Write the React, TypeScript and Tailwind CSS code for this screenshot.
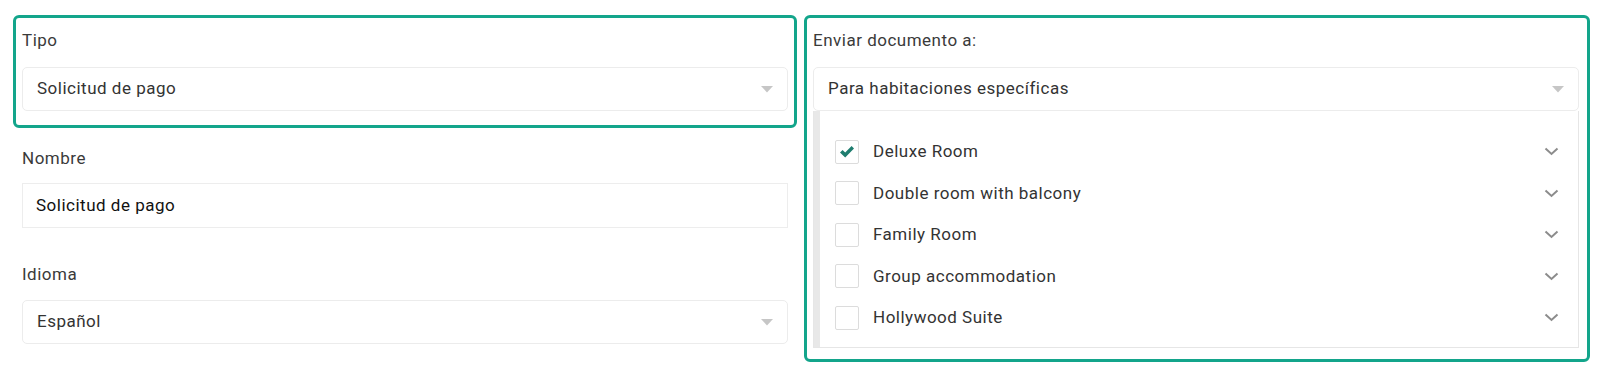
import React from "react";

const rooms = [
  { name: "Deluxe Room", checked: true },
  { name: "Double room with balcony", checked: false },
  { name: "Family Room", checked: false },
  { name: "Group accommodation", checked: false },
  { name: "Hollywood Suite", checked: false },
];

function Caret() {
  return (
    <svg width="12" height="7" viewBox="0 0 12 7" className="shrink-0">
      <path d="M0 0 L12 0 L6 6.5 Z" fill="#c6c6c6" />
    </svg>
  );
}

function Chevron() {
  return (
    <svg width="15" height="9" viewBox="0 0 15 9" className="shrink-0">
      <path d="M1.5 1.5 L7.5 7 L13.5 1.5" fill="none" stroke="#8c8c8c" strokeWidth="2" />
    </svg>
  );
}

function Select({ value }: { value: string }) {
  return (
    <div className="flex h-[44px] items-center justify-between rounded-[5px] border border-[#ececec] bg-white pl-[14px] pr-[14px]">
      <span className="text-[17px] tracking-[0.5px] text-[#333]">{value}</span>
      <Caret />
    </div>
  );
}

function Label({ children }: { children: React.ReactNode }) {
  return (
    <div className="text-[17px] leading-[24px] tracking-[0.5px] text-[#3a3a3a]">{children}</div>
  );
}

export default function App() {
  return (
    <div
      className="flex h-[379px] w-[1600px] gap-[7px] bg-white pl-[13px] pr-[10px] pt-[15px]"
      style={{ fontFamily: "Roboto, 'Liberation Sans', sans-serif" }}
    >
      {/* left column */}
      <div className="flex w-[784px] flex-col">
        <div className="rounded-[6px] border-[3px] border-[#13a58b] px-[6px] pb-[14px] pt-[10px]">
          <Label>Tipo</Label>
          <div className="mt-[15px]">
            <Select value="Solicitud de pago" />
          </div>
        </div>

        <div className="px-[9px]">
          <div className="mt-[18px]">
            <Label>Nombre</Label>
          </div>
          <div className="mt-[13px] flex h-[45px] items-center border border-[#ededed] pl-[13px]">
            <span className="text-[17px] tracking-[0.5px] text-[#111]">Solicitud de pago</span>
          </div>

          <div className="mt-[34px]">
            <Label>Idioma</Label>
          </div>
          <div className="mt-[14px]">
            <Select value="Español" />
          </div>
        </div>
      </div>

      {/* right column */}
      <div className="h-[347px] w-[786px] rounded-[6px] border-[3px] border-[#13a58b] pb-[11px] pl-[6px] pr-[8px] pt-[10px]">
        <Label>Enviar documento a:</Label>
        <div className="mt-[15px]">
          <Select value="Para habitaciones específicas" />
        </div>
        <div className="flex h-[237px] border border-t-0 border-[#e6e6e6]">
          <div className="w-[6px] bg-[#e8e8e8]" />
          <div className="flex flex-1 flex-col pt-[20px]">
            {rooms.map((r) => (
              <div key={r.name} className="flex h-[41.5px] shrink-0 items-center pl-[15px] pr-[19px]">
                <div className="flex h-[24px] w-[24px] items-center justify-center rounded-[2px] border border-[#dcdcdc] bg-white">
                  {r.checked && (
                    <svg width="16" height="14" viewBox="0 0 16 14">
                      <path
                        d="M1 7.6 L3.6 5 L6.2 7.6 L12.6 1 L15 3.6 L6.2 12.6 Z"
                        fill="#1f7d6f"
                      />
                    </svg>
                  )}
                </div>
                <span className="ml-[14px] flex-1 text-[17px] tracking-[0.5px] text-[#333]">
                  {r.name}
                </span>
                <Chevron />
              </div>
            ))}
          </div>
        </div>
      </div>
    </div>
  );
}
